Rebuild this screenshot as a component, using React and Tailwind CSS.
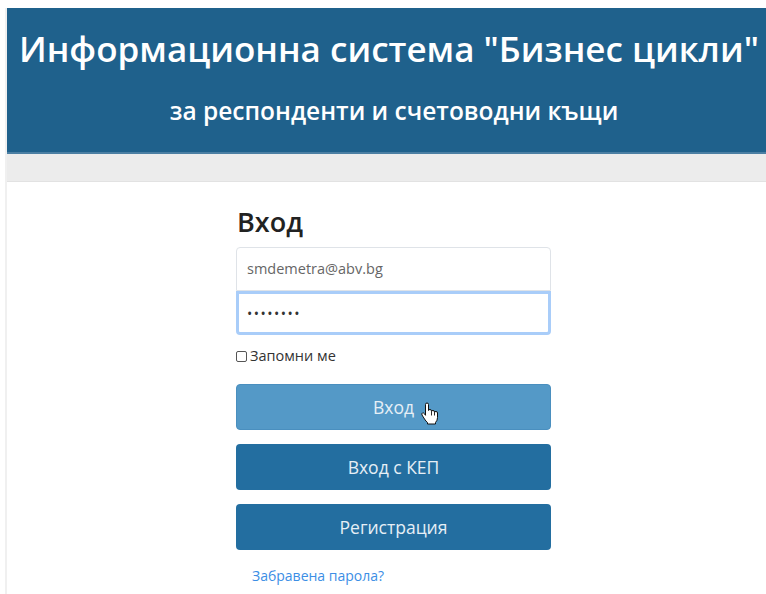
import React from "react";

function HandCursor() {
  return (
    <svg width="18" height="24" viewBox="0 0 18 23" className="block">
      <path
        d="M4.5 2 Q4.5 0.5 6 0.5 Q7.5 0.5 7.5 2 V8 Q7.5 7 9 7 Q10.5 7 10.5 8.5 V9 Q10.5 8 12 8 Q13.5 8 13.5 9.5 V10 Q13.5 9 15 9 Q16.5 9 16.5 10.5 V15 Q16.5 18 14.5 20 V21.5 H6.5 V20 Q5 19 3.5 16.5 L1 12.5 Q0.3 11 1.5 10.5 Q2.7 10 3.7 11.5 L4.5 12.8 Z"
        fill="#ffffff"
        stroke="#111"
        strokeWidth="1"
        strokeLinejoin="round"
      />
      <path d="M10.5 9 V13 M13.5 10 V13" stroke="#111" strokeWidth="0.9" fill="none" />
    </svg>
  );
}

export default function App() {
  const font = { fontFamily: '"Open Sans", "Noto Sans", sans-serif' };
  return (
    <div className="w-[766px] h-[594px] overflow-hidden bg-white" style={font}>
      <div className="flex h-full pt-[8px] pl-[5px]">
        <div className="w-[2px] bg-[#f0f0f0] shrink-0" />
        <div className="w-[774px] shrink-0 flex flex-col">
          {/* header */}
          <header className="h-[146px] bg-[#1f618c] border-b-2 border-[#4b7fa3] flex flex-col text-white">
            <h1 className="mt-[17px] pl-[12px] text-[35px] leading-[48px] font-semibold whitespace-nowrap">
              Информационна система "Бизнес цикли"
            </h1>
            <p className="mt-[21px] text-center text-[24.5px] leading-[34px] font-semibold whitespace-nowrap">
              за респонденти и счетоводни къщи
            </p>
          </header>
          <div className="h-[28px] bg-[#ececec] border-b border-[#e2e2e2]" />

          {/* login form */}
          <div className="pl-[229px] pt-[22px]">
            <div className="w-[315px] flex flex-col">
              <h2 className="text-[27px] leading-[36px] font-semibold text-[#222] pl-[1px]">Вход</h2>
              <div className="mt-[7px] h-[44px] border border-[#dfe3e8] rounded-t-[4px] flex items-center px-[10px] text-[14.5px] text-[#666]">
                smdemetra@abv.bg
              </div>
              <div className="h-[44px] border-[3px] border-[#a9cdf9] rounded-b-[4px] flex items-center px-[8px] text-[14px] text-[#333] tracking-[1.5px]">
                ••••••••
              </div>
              <label className="mt-[12px] flex items-center gap-[3px] text-[14.5px] text-[#333] leading-[18px]">
                <span className="w-[11px] h-[11px] border border-[#555] rounded-[2px] bg-white" />
                <span>Запомни ме</span>
              </label>
              <div className="relative mt-[19px] h-[46px] rounded-[4px] bg-[#5499c7] border border-[#4a8fbf] flex items-center justify-center text-[17.5px] text-[#e6eff6]">
                Вход
                <div className="absolute left-[184px] top-[17px]">
                  <HandCursor />
                </div>
              </div>
              <div className="mt-[14px] h-[46px] rounded-[4px] bg-[#236ea0] flex items-center justify-center text-[17.5px] text-[#e6eff6]">
                Вход с КЕП
              </div>
              <div className="mt-[14px] h-[46px] rounded-[4px] bg-[#236ea0] flex items-center justify-center text-[17.5px] text-[#e6eff6]">
                Регистрация
              </div>
              <a className="mt-[17px] ml-[16px] text-[14px] text-[#3c8ee5] leading-[18px]">Забравена парола?</a>
            </div>
          </div>
        </div>
      </div>
    </div>
  );
}
